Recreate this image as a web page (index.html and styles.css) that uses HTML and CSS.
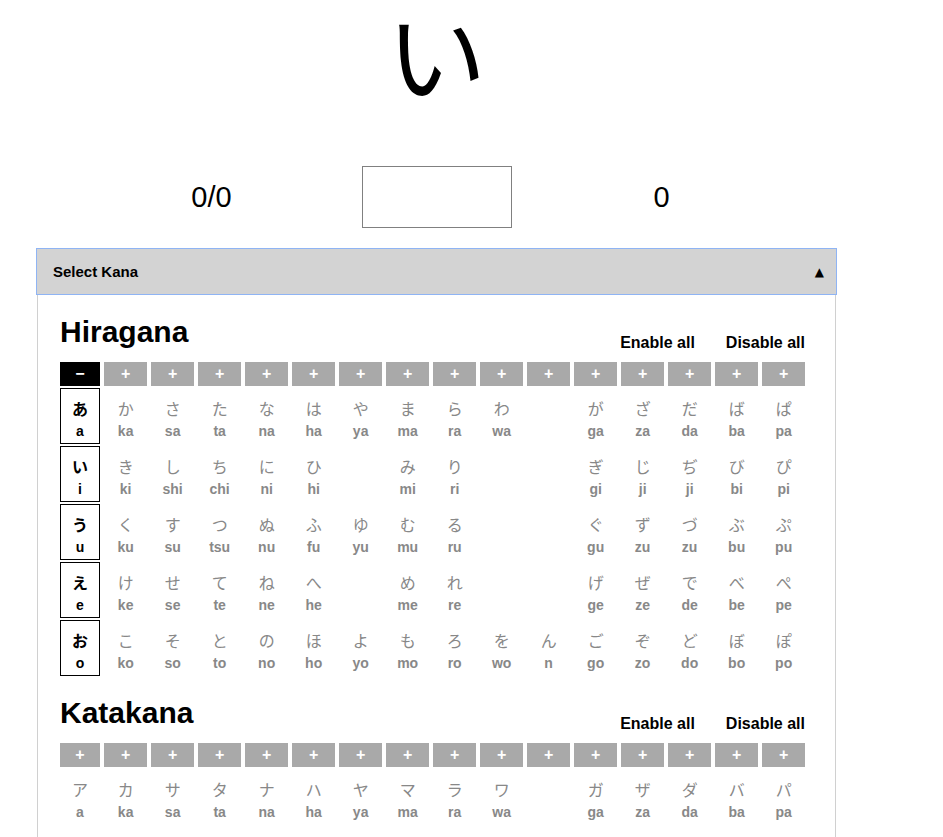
FILE: index.html
```html
<!DOCTYPE html>
<html lang="ja">
<head>
<meta charset="utf-8">
<title>Kana Practice</title>
<link rel="stylesheet" href="styles.css">
</head>
<body>
<div class="page">
  <div class="prompt">い</div>
  <div class="score-row">
    <div class="score-cell">0/0</div>
    <div class="score-cell"><input class="answer" type="text"></div>
    <div class="score-cell">0</div>
  </div>
  <div class="drawer-bar"><span>Select Kana</span><span class="caret">▲</span></div>
  <div class="drawer-panel">
    <div class="section">
      <div class="section-head">
        <h2>Hiragana</h2>
        <div class="toggles"><span>Enable all</span><span>Disable all</span></div>
      </div>
      <div class="grid">
        <div class="btn on">−</div><div class="btn">+</div><div class="btn">+</div><div class="btn">+</div><div class="btn">+</div><div class="btn">+</div><div class="btn">+</div><div class="btn">+</div><div class="btn">+</div><div class="btn">+</div><div class="btn">+</div><div class="btn">+</div><div class="btn">+</div><div class="btn">+</div><div class="btn">+</div><div class="btn">+</div>

        <div class="cell on"><span class="k">あ</span><span class="r">a</span></div>
        <div class="cell"><span class="k">か</span><span class="r">ka</span></div>
        <div class="cell"><span class="k">さ</span><span class="r">sa</span></div>
        <div class="cell"><span class="k">た</span><span class="r">ta</span></div>
        <div class="cell"><span class="k">な</span><span class="r">na</span></div>
        <div class="cell"><span class="k">は</span><span class="r">ha</span></div>
        <div class="cell"><span class="k">や</span><span class="r">ya</span></div>
        <div class="cell"><span class="k">ま</span><span class="r">ma</span></div>
        <div class="cell"><span class="k">ら</span><span class="r">ra</span></div>
        <div class="cell"><span class="k">わ</span><span class="r">wa</span></div>
        <div class="cell"></div>
        <div class="cell"><span class="k">が</span><span class="r">ga</span></div>
        <div class="cell"><span class="k">ざ</span><span class="r">za</span></div>
        <div class="cell"><span class="k">だ</span><span class="r">da</span></div>
        <div class="cell"><span class="k">ば</span><span class="r">ba</span></div>
        <div class="cell"><span class="k">ぱ</span><span class="r">pa</span></div>

        <div class="cell on"><span class="k">い</span><span class="r">i</span></div>
        <div class="cell"><span class="k">き</span><span class="r">ki</span></div>
        <div class="cell"><span class="k">し</span><span class="r">shi</span></div>
        <div class="cell"><span class="k">ち</span><span class="r">chi</span></div>
        <div class="cell"><span class="k">に</span><span class="r">ni</span></div>
        <div class="cell"><span class="k">ひ</span><span class="r">hi</span></div>
        <div class="cell"></div>
        <div class="cell"><span class="k">み</span><span class="r">mi</span></div>
        <div class="cell"><span class="k">り</span><span class="r">ri</span></div>
        <div class="cell"></div>
        <div class="cell"></div>
        <div class="cell"><span class="k">ぎ</span><span class="r">gi</span></div>
        <div class="cell"><span class="k">じ</span><span class="r">ji</span></div>
        <div class="cell"><span class="k">ぢ</span><span class="r">ji</span></div>
        <div class="cell"><span class="k">び</span><span class="r">bi</span></div>
        <div class="cell"><span class="k">ぴ</span><span class="r">pi</span></div>

        <div class="cell on"><span class="k">う</span><span class="r">u</span></div>
        <div class="cell"><span class="k">く</span><span class="r">ku</span></div>
        <div class="cell"><span class="k">す</span><span class="r">su</span></div>
        <div class="cell"><span class="k">つ</span><span class="r">tsu</span></div>
        <div class="cell"><span class="k">ぬ</span><span class="r">nu</span></div>
        <div class="cell"><span class="k">ふ</span><span class="r">fu</span></div>
        <div class="cell"><span class="k">ゆ</span><span class="r">yu</span></div>
        <div class="cell"><span class="k">む</span><span class="r">mu</span></div>
        <div class="cell"><span class="k">る</span><span class="r">ru</span></div>
        <div class="cell"></div>
        <div class="cell"></div>
        <div class="cell"><span class="k">ぐ</span><span class="r">gu</span></div>
        <div class="cell"><span class="k">ず</span><span class="r">zu</span></div>
        <div class="cell"><span class="k">づ</span><span class="r">zu</span></div>
        <div class="cell"><span class="k">ぶ</span><span class="r">bu</span></div>
        <div class="cell"><span class="k">ぷ</span><span class="r">pu</span></div>

        <div class="cell on"><span class="k">え</span><span class="r">e</span></div>
        <div class="cell"><span class="k">け</span><span class="r">ke</span></div>
        <div class="cell"><span class="k">せ</span><span class="r">se</span></div>
        <div class="cell"><span class="k">て</span><span class="r">te</span></div>
        <div class="cell"><span class="k">ね</span><span class="r">ne</span></div>
        <div class="cell"><span class="k">へ</span><span class="r">he</span></div>
        <div class="cell"></div>
        <div class="cell"><span class="k">め</span><span class="r">me</span></div>
        <div class="cell"><span class="k">れ</span><span class="r">re</span></div>
        <div class="cell"></div>
        <div class="cell"></div>
        <div class="cell"><span class="k">げ</span><span class="r">ge</span></div>
        <div class="cell"><span class="k">ぜ</span><span class="r">ze</span></div>
        <div class="cell"><span class="k">で</span><span class="r">de</span></div>
        <div class="cell"><span class="k">べ</span><span class="r">be</span></div>
        <div class="cell"><span class="k">ぺ</span><span class="r">pe</span></div>

        <div class="cell on"><span class="k">お</span><span class="r">o</span></div>
        <div class="cell"><span class="k">こ</span><span class="r">ko</span></div>
        <div class="cell"><span class="k">そ</span><span class="r">so</span></div>
        <div class="cell"><span class="k">と</span><span class="r">to</span></div>
        <div class="cell"><span class="k">の</span><span class="r">no</span></div>
        <div class="cell"><span class="k">ほ</span><span class="r">ho</span></div>
        <div class="cell"><span class="k">よ</span><span class="r">yo</span></div>
        <div class="cell"><span class="k">も</span><span class="r">mo</span></div>
        <div class="cell"><span class="k">ろ</span><span class="r">ro</span></div>
        <div class="cell"><span class="k">を</span><span class="r">wo</span></div>
        <div class="cell"><span class="k">ん</span><span class="r">n</span></div>
        <div class="cell"><span class="k">ご</span><span class="r">go</span></div>
        <div class="cell"><span class="k">ぞ</span><span class="r">zo</span></div>
        <div class="cell"><span class="k">ど</span><span class="r">do</span></div>
        <div class="cell"><span class="k">ぼ</span><span class="r">bo</span></div>
        <div class="cell"><span class="k">ぽ</span><span class="r">po</span></div>
      </div>
    </div>

    <div class="section">
      <div class="section-head">
        <h2>Katakana</h2>
        <div class="toggles"><span>Enable all</span><span>Disable all</span></div>
      </div>
      <div class="grid">
        <div class="btn">+</div><div class="btn">+</div><div class="btn">+</div><div class="btn">+</div><div class="btn">+</div><div class="btn">+</div><div class="btn">+</div><div class="btn">+</div><div class="btn">+</div><div class="btn">+</div><div class="btn">+</div><div class="btn">+</div><div class="btn">+</div><div class="btn">+</div><div class="btn">+</div><div class="btn">+</div>

        <div class="cell"><span class="k">ア</span><span class="r">a</span></div>
        <div class="cell"><span class="k">カ</span><span class="r">ka</span></div>
        <div class="cell"><span class="k">サ</span><span class="r">sa</span></div>
        <div class="cell"><span class="k">タ</span><span class="r">ta</span></div>
        <div class="cell"><span class="k">ナ</span><span class="r">na</span></div>
        <div class="cell"><span class="k">ハ</span><span class="r">ha</span></div>
        <div class="cell"><span class="k">ヤ</span><span class="r">ya</span></div>
        <div class="cell"><span class="k">マ</span><span class="r">ma</span></div>
        <div class="cell"><span class="k">ラ</span><span class="r">ra</span></div>
        <div class="cell"><span class="k">ワ</span><span class="r">wa</span></div>
        <div class="cell"></div>
        <div class="cell"><span class="k">ガ</span><span class="r">ga</span></div>
        <div class="cell"><span class="k">ザ</span><span class="r">za</span></div>
        <div class="cell"><span class="k">ダ</span><span class="r">da</span></div>
        <div class="cell"><span class="k">バ</span><span class="r">ba</span></div>
        <div class="cell"><span class="k">パ</span><span class="r">pa</span></div>
      </div>
    </div>
  </div>
</div>
</body>
</html>
```
FILE: styles.css
```css
body {
  margin: 0;
  background: #fff;
  color: #000;
  font-family: "Liberation Sans", Arial, sans-serif;
}

.page {
  width: 801px;
  margin-left: 36px;
}

.prompt {
  font-family: "Noto Sans CJK JP", sans-serif;
  font-size: 100px;
  line-height: 100px;
  padding-top: 2px;
  text-align: center;
}

.score-row {
  display: flex;
  justify-content: center;
  align-items: center;
  margin-top: 64px;
}

.score-cell {
  width: 225px;
  display: flex;
  justify-content: center;
  font-size: 29px;
}

.answer {
  width: 150px;
  height: 62px;
  box-sizing: border-box;
  border: 1px solid #808080;
  margin: 0;
  padding: 0 6px;
  font-size: 24px;
  background: #fff;
}

.drawer-bar {
  margin-top: 20px;
  height: 47px;
  box-sizing: border-box;
  border: 1px solid #8fb4f4;
  background: #d3d3d3;
  display: flex;
  align-items: center;
  justify-content: space-between;
  padding: 0 12px 0 16px;
  font-weight: bold;
  font-size: 15px;
}

.caret {
  font-family: "DejaVu Sans", sans-serif;
  font-size: 12px;
}

.drawer-panel {
  margin: 0 1px;
  border: 1px solid #d0d0d0;
  border-top: none;
  padding: 22px 0 40px 22px;
}

.section + .section {
  margin-top: 22px;
}

.section-head {
  width: 745px;
  display: flex;
  justify-content: space-between;
  align-items: flex-end;
  margin-bottom: 10px;
}

.section-head h2 {
  margin: 0 0 5px;
  font-size: 30px;
  line-height: 30px;
}

.toggles {
  display: flex;
  gap: 31px;
  font-weight: bold;
  font-size: 16px;
  line-height: 18px;
}

.grid {
  display: grid;
  width: 745px;
  grid-template-columns: 40px repeat(15, 1fr);
  column-gap: 4.3px;
  row-gap: 2px;
}

.btn {
  height: 24px;
  background: #a9a9a9;
  color: #fff;
  font-weight: bold;
  font-size: 16px;
  display: flex;
  align-items: center;
  justify-content: center;
}

.btn.on {
  background: #000;
}

.cell {
  height: 56px;
  box-sizing: border-box;
  border: 1px solid transparent;
  padding-top: 9px;
  display: flex;
  flex-direction: column;
  align-items: center;
  color: #888;
}

.cell.on {
  border-color: #000;
  color: #000;
}

.k {
  font-family: "Noto Sans CJK JP", sans-serif;
  font-size: 16px;
  line-height: 20px;
}

.cell.on .k {
  font-weight: bold;
}

.r {
  font-weight: bold;
  font-size: 14px;
  line-height: 18px;
  margin-top: 4px;
}
```
